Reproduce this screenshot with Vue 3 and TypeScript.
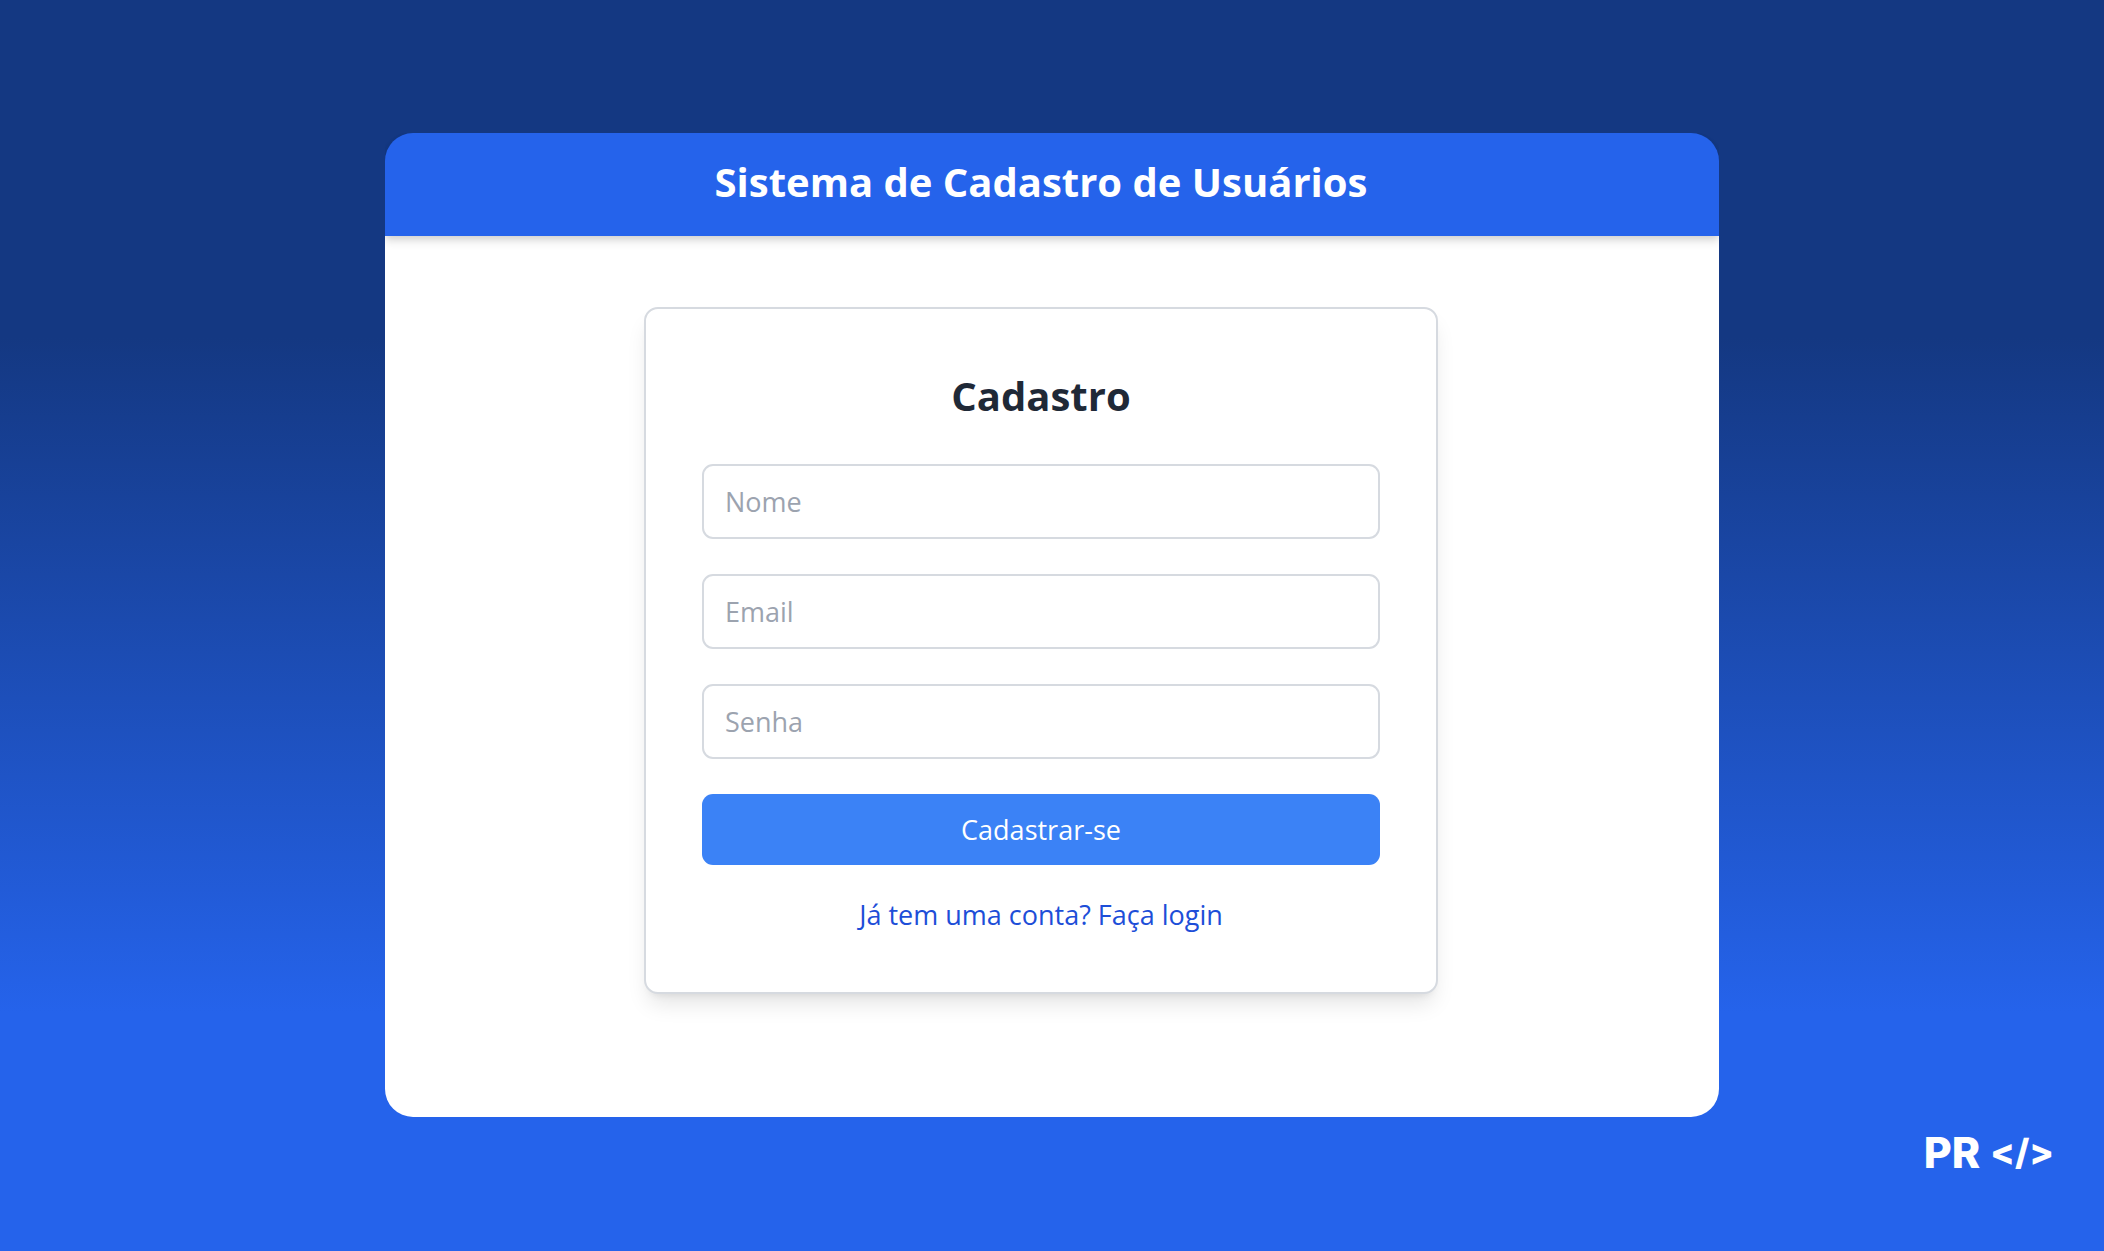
<script setup lang="ts">
import { reactive } from 'vue'

interface Field {
  key: 'nome' | 'email' | 'senha'
  label: string
  type: string
}

const fields: Field[] = [
  { key: 'nome', label: 'Nome', type: 'text' },
  { key: 'email', label: 'Email', type: 'email' },
  { key: 'senha', label: 'Senha', type: 'password' },
]

const form = reactive({ nome: '', email: '', senha: '' })
</script>

<template>
  <div class="page">
    <div class="window">
      <header class="topbar">
        <h1 class="heading">Sistema de Cadastro de Usuários</h1>
      </header>
      <main class="content">
        <form class="card" @submit.prevent>
          <h2 class="heading dark">Cadastro</h2>
          <input
            v-for="field in fields"
            :key="field.key"
            v-model="form[field.key]"
            class="field"
            :type="field.type"
            :name="field.key"
            :placeholder="field.label"
            :aria-label="field.label"
          />
          <button class="submit" type="submit">Cadastrar-se</button>
          <a class="login" href="#login">Já tem uma conta? Faça login</a>
        </form>
      </main>
    </div>
    <footer class="brand">
      <span class="initials">PR</span>
      <span class="tag">&lt;/&gt;</span>
    </footer>
  </div>
</template>

<style>
body {
  margin: 0;
}
</style>

<style scoped>
.page {
  box-sizing: border-box;
  min-height: 100vh;
  padding: 133px 50px 0;
  display: flex;
  flex-direction: column;
  align-items: center;
  background: linear-gradient(180deg, #143882 27%, #2563eb 81%);
  font-family: "Segoe UI", "Open Sans", "Noto Sans", sans-serif;
  font-size: 27px;
}

.window {
  width: 100%;
  max-width: 1334px;
  border-radius: 28px;
}

.topbar {
  position: relative;
  padding: 21px 22px 26px 0;
  border-radius: 28px 28px 0 0;
  background: #2563eb;
  color: #fff;
  box-shadow: 0 6px 10px 0 rgb(0 0 0 / 10%), 0 3px 6px -1px rgb(0 0 0 / 10%);
  clip-path: inset(0 0 -24px 0);
}

.heading {
  margin: 0;
  font-size: 40px;
  line-height: 56px;
  font-weight: 700;
  text-align: center;
}

.dark {
  margin-bottom: 5px;
  color: #1f2937;
}

.content {
  display: flex;
  justify-content: center;
  padding: 71px 22px 123px 0;
  border-radius: 0 0 28px 28px;
  background: #fff;
}

.card {
  box-sizing: border-box;
  width: 100%;
  max-width: 794px;
  padding: 59px 56px 58px;
  display: flex;
  flex-direction: column;
  gap: 35px;
  border: 2px solid #d6dae0;
  border-radius: 14px;
  background: #fff;
  box-shadow: 0 14px 21px -4px rgb(0 0 0 / 10%), 0 6px 8px -6px rgb(0 0 0 / 10%);
}

.field {
  box-sizing: border-box;
  width: 100%;
  height: 75px;
  padding: 0 21px;
  border: 2px solid #d6dae0;
  border-radius: 11px;
  background: #fff;
  color: #1f2937;
  font: inherit;
}

.field::placeholder {
  color: #9ca3af;
  opacity: 1;
}

.submit {
  height: 71px;
  padding: 0 22px;
  border: 0;
  border-radius: 11px;
  background: #3b82f6;
  color: #fff;
  font: inherit;
  cursor: pointer;
}

.login {
  align-self: center;
  margin-top: -4px;
  line-height: 38px;
  color: #1d4ed8;
  text-decoration: none;
}

.brand {
  align-self: stretch;
  display: flex;
  justify-content: flex-end;
  align-items: center;
  gap: 10px;
  padding-top: 9px;
  color: #fff;
  font-family: Inter, sans-serif;
  font-weight: 800;
  line-height: 52px;
}

.initials {
  font-size: 43px;
}

.tag {
  font-size: 36px;
}
</style>
